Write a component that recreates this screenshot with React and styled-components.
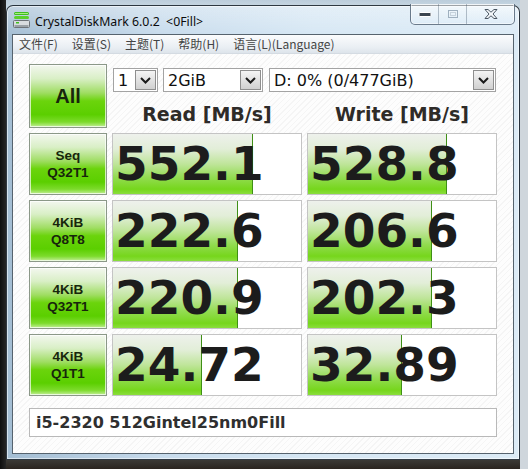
import React from "react";
import styled, { createGlobalStyle } from "styled-components";

const GlobalStyle = createGlobalStyle`
  html, body {
    margin: 0;
    padding: 0;
  }
  body {
    width: 528px;
    height: 469px;
    overflow: hidden;
    background: #1b1b1b;
    font-family: "DejaVu Sans", sans-serif;
  }
`;

const Desktop = styled.div`
  width: 528px;
  height: 469px;
  box-sizing: border-box;
  padding: 5px 8px 9px 6px;
  display: flex;
  background: linear-gradient(to right, #0e0e0e 0, #262626 6px, transparent 6px),
    linear-gradient(to right, transparent 520px, #cfd6dc 520px),
    linear-gradient(to bottom, #bccddb 0, #c4d4e0 5px, #3b3a36 460px, #2a241f 469px);
`;

const Window = styled.div`
  flex: 1;
  display: flex;
  flex-direction: column;
  padding: 0 5px 5px 5px;
  border: 1px solid rgba(18, 26, 34, 0.85);
  border-radius: 7px 7px 0 0;
  background: linear-gradient(to bottom, rgba(255, 255, 255, 0.35), rgba(255, 255, 255, 0) 30px),
    linear-gradient(to right, #a3bdd3 0, #c7dbec 30%, #d6e7f4 60%, #dcebf6 100%);
  box-shadow: inset 0 0 0 1px rgba(255, 255, 255, 0.55);
`;

const TitleBar = styled.div`
  height: 28px;
  display: flex;
  align-items: center;
`;

const TitleText = styled.span`
  margin-left: 5px;
  margin-top: 2px;
  font-family: "Noto Sans", sans-serif;
  font-size: 12.3px;
  color: #0b0b0b;
  white-space: pre;
`;

const Controls = styled.div`
  margin-left: auto;
  margin-right: -1px;
  align-self: flex-start;
  margin-top: -2px;
  height: 20px;
  display: flex;
  border: 1px solid rgba(50, 70, 92, 0.7);
  border-top: none;
  border-radius: 0 0 5px 5px;
  background: linear-gradient(to bottom, rgba(255, 255, 255, 0.55), rgba(220, 236, 248, 0.35));
  box-shadow: inset 0 0 0 1px rgba(255, 255, 255, 0.5);
  overflow: hidden;
`;

const CtrlButton = styled.div`
  width: ${(p) => p.$w}px;
  display: flex;
  align-items: center;
  justify-content: center;
  border-left: ${(p) => (p.$first ? "none" : "1px solid rgba(60, 80, 100, 0.35)")};
`;

const Client = styled.div`
  flex: 1;
  display: flex;
  flex-direction: column;
  border: 1px solid #56636e;
  background: #fbfbfb;
`;

const MenuBar = styled.div`
  height: 18px;
  display: flex;
  align-items: center;
  gap: 14px;
  padding-left: 6px;
  background: linear-gradient(to bottom, #fbfcfd, #e9eef3 70%, #dde4eb);
  border-bottom: 1px solid #d4dbe2;
`;

const MenuItem = styled.span`
  font-family: "Noto Sans CJK SC", "Noto Sans", sans-serif;
  font-size: 12px;
  color: #444;
  line-height: 18px;
`;

const Main = styled.div`
  flex: 1;
  display: grid;
  grid-template-columns: 78px 190px 190px;
  grid-template-rows: 64px repeat(4, 62px) 36px;
  column-gap: 5px;
  row-gap: 5px;
  align-content: start;
  padding: 10px 16px 0 16px;
  background: repeating-linear-gradient(135deg, #fdfdfd 0, #fdfdfd 3px, #f5f5f5 3px, #f5f5f5 4px);
`;

const GreenButton = styled.div`
  box-sizing: border-box;
  border: 1px solid #8b9888;
  box-shadow: inset 0 0 0 1px rgba(255, 255, 255, 0.7);
  background: linear-gradient(
    to bottom,
    #f3f7ef 0%,
    #d9efc6 22%,
    #9fdd62 45%,
    #6bd40c 58%,
    #5bcf00 80%,
    #7ddb2c 92%,
    #c4ef9a 100%
  );
  display: flex;
  flex-direction: column;
  align-items: center;
  justify-content: center;
  color: #17260c;
  font-family: "Liberation Sans", sans-serif;
  font-weight: bold;
  font-size: ${(p) => (p.$big ? "20px" : "13.5px")};
  line-height: ${(p) => (p.$big ? "22px" : "17px")};
`;

const TopPanel = styled.div`
  grid-column: 2 / 4;
  display: flex;
  flex-direction: column;
`;

const SelectRow = styled.div`
  margin-top: 4px;
  padding-left: 1px;
  display: flex;
  height: 24px;
`;

const Select = styled.div`
  width: ${(p) => p.$w}px;
  margin-right: ${(p) => p.$gap || 0}px;
  box-sizing: border-box;
  border: 1px solid #a3a3a3;
  background: #fff;
  display: flex;
  align-items: center;
  padding: 1px;
`;

const SelectText = styled.span`
  flex: 1;
  padding-left: 3px;
  font-size: 16px;
  color: #111;
`;

const ArrowBox = styled.div`
  width: 21px;
  align-self: stretch;
  box-sizing: border-box;
  border: 1px solid #8e8e8e;
  background: linear-gradient(to bottom, #f4f4f4, #e2e2e2 50%, #d0d0d0);
  display: flex;
  align-items: center;
  justify-content: center;
`;

const Headers = styled.div`
  flex: 1;
  display: grid;
  grid-template-columns: 190px 190px;
  column-gap: 5px;
`;

const Header = styled.div`
  display: flex;
  align-items: center;
  justify-content: center;
  padding-top: 8px;
  font-weight: bold;
  font-size: 19px;
  color: #2e2b28;
`;

const ValueCell = styled.div`
  position: relative;
  box-sizing: border-box;
  border: 1px solid #c4c4c4;
  background: #fff;
  overflow: hidden;
  display: flex;
  align-items: center;
`;

const Bar = styled.div`
  position: absolute;
  left: 0;
  top: 0;
  bottom: 0;
  background: linear-gradient(
    to bottom,
    #eef1ec 0%,
    #e2eed8 25%,
    #bfe59a 50%,
    #93dc52 72%,
    #76d61c 92%,
    #8ade3c 100%
  );
  border-right: 1px solid #3f8f16;
`;

const Value = styled.span`
  position: relative;
  padding-left: 2px;
  margin-top: -2px;
  font-weight: bold;
  font-size: 47px;
  color: #1c1c1c;
`;

const Comment = styled.div`
  grid-column: 1 / 4;
  margin-top: 7px;
  box-sizing: border-box;
  border: 1px solid #b9b9b9;
  background: #fff;
  display: flex;
  align-items: center;
  padding-left: 6px;
  font-weight: bold;
  font-size: 16px;
  color: #2f2f2f;
`;

const Chevron = () => (
  <svg width="11" height="7" viewBox="0 0 11 7">
    <path d="M1 1 L5.5 5.5 L10 1" fill="none" stroke="#1a1a1a" strokeWidth="2" />
  </svg>
);

const AppIcon = () => (
  <svg width="17" height="18" viewBox="0 0 17 18" style={{ marginLeft: 1 }}>
    <rect x="1" y="1" width="15" height="3" rx="1.5" fill="#3fbf1e" />
    <rect x="1" y="5" width="15" height="3" rx="1.5" fill="#5bd02c" />
    <rect x="2" y="2" width="13" height="1" fill="#a6ee80" />
    <rect x="0.5" y="9.5" width="16" height="7" rx="1" fill="#d8dcdf" stroke="#6d7378" />
    <rect x="1.5" y="14" width="14" height="2" fill="#9aa1a6" />
    <rect x="3" y="11" width="3" height="1.5" fill="#3fbf1e" />
  </svg>
);

const MinIcon = () => (
  <svg width="14" height="7" viewBox="0 0 14 7">
    <rect x="1" y="1.5" width="12" height="4" rx="1" fill="#3a4550" stroke="#fff" strokeWidth="1" />
  </svg>
);

const MaxIcon = () => (
  <svg width="12" height="10" viewBox="0 0 12 10">
    <rect x="1.5" y="1.5" width="9" height="7" fill="none" stroke="#9fb0bf" strokeWidth="1" />
    <rect x="3.5" y="3.5" width="5" height="3" fill="none" stroke="#c6d2dc" strokeWidth="1" />
  </svg>
);

const CloseIcon = () => (
  <svg width="14" height="12" viewBox="0 0 14 12">
    <path
      d="M1 1.5 L4 1.5 L7 4.2 L10 1.5 L13 1.5 L9 6 L13 10.5 L10 10.5 L7 7.8 L4 10.5 L1 10.5 L5 6 Z"
      fill="#f4f7fa"
      stroke="#4b5763"
      strokeWidth="1"
      strokeLinejoin="round"
    />
  </svg>
);

const rows = [
  { a: "Seq", b: "Q32T1", read: 552.1, write: 528.8, rs: "552.1", ws: "528.8" },
  { a: "4KiB", b: "Q8T8", read: 222.6, write: 206.6, rs: "222.6", ws: "206.6" },
  { a: "4KiB", b: "Q32T1", read: 220.9, write: 202.3, rs: "220.9", ws: "202.3" },
  { a: "4KiB", b: "Q1T1", read: 24.72, write: 32.89, rs: "24.72", ws: "32.89" },
];

// CrystalDiskMark draws the meter on a log scale
const barWidth = (v) => Math.round(35 + 38 * Math.log10(v));

const menus = ["文件(F)", "设置(S)", "主题(T)", "帮助(H)", "语言(L)(Language)"];

export default function App() {
  return (
    <>
      <GlobalStyle />
      <Desktop>
        <Window>
          <TitleBar>
            <AppIcon />
            <TitleText>{"CrystalDiskMark 6.0.2  <0Fill>"}</TitleText>
            <Controls>
              <CtrlButton $w={27} $first>
                <MinIcon />
              </CtrlButton>
              <CtrlButton $w={27}>
                <MaxIcon />
              </CtrlButton>
              <CtrlButton $w={47}>
                <CloseIcon />
              </CtrlButton>
            </Controls>
          </TitleBar>
          <Client>
            <MenuBar>
              {menus.map((m) => (
                <MenuItem key={m}>{m}</MenuItem>
              ))}
            </MenuBar>
            <Main>
              <GreenButton $big>All</GreenButton>
              <TopPanel>
                <SelectRow>
                  <Select $w={45} $gap={5}>
                    <SelectText>1</SelectText>
                    <ArrowBox>
                      <Chevron />
                    </ArrowBox>
                  </Select>
                  <Select $w={100} $gap={6}>
                    <SelectText>2GiB</SelectText>
                    <ArrowBox>
                      <Chevron />
                    </ArrowBox>
                  </Select>
                  <Select $w={227}>
                    <SelectText>D: 0% (0/477GiB)</SelectText>
                    <ArrowBox>
                      <Chevron />
                    </ArrowBox>
                  </Select>
                </SelectRow>
                <Headers>
                  <Header>Read [MB/s]</Header>
                  <Header>Write [MB/s]</Header>
                </Headers>
              </TopPanel>
              {rows.map((r, i) => (
                <React.Fragment key={i}>
                  <GreenButton>
                    <span>{r.a}</span>
                    <span>{r.b}</span>
                  </GreenButton>
                  <ValueCell>
                    <Bar style={{ width: barWidth(r.read) }} />
                    <Value>{r.rs}</Value>
                  </ValueCell>
                  <ValueCell>
                    <Bar style={{ width: barWidth(r.write) }} />
                    <Value>{r.ws}</Value>
                  </ValueCell>
                </React.Fragment>
              ))}
              <Comment>i5-2320 512Gintel25nm0Fill</Comment>
            </Main>
          </Client>
        </Window>
      </Desktop>
    </>
  );
}
